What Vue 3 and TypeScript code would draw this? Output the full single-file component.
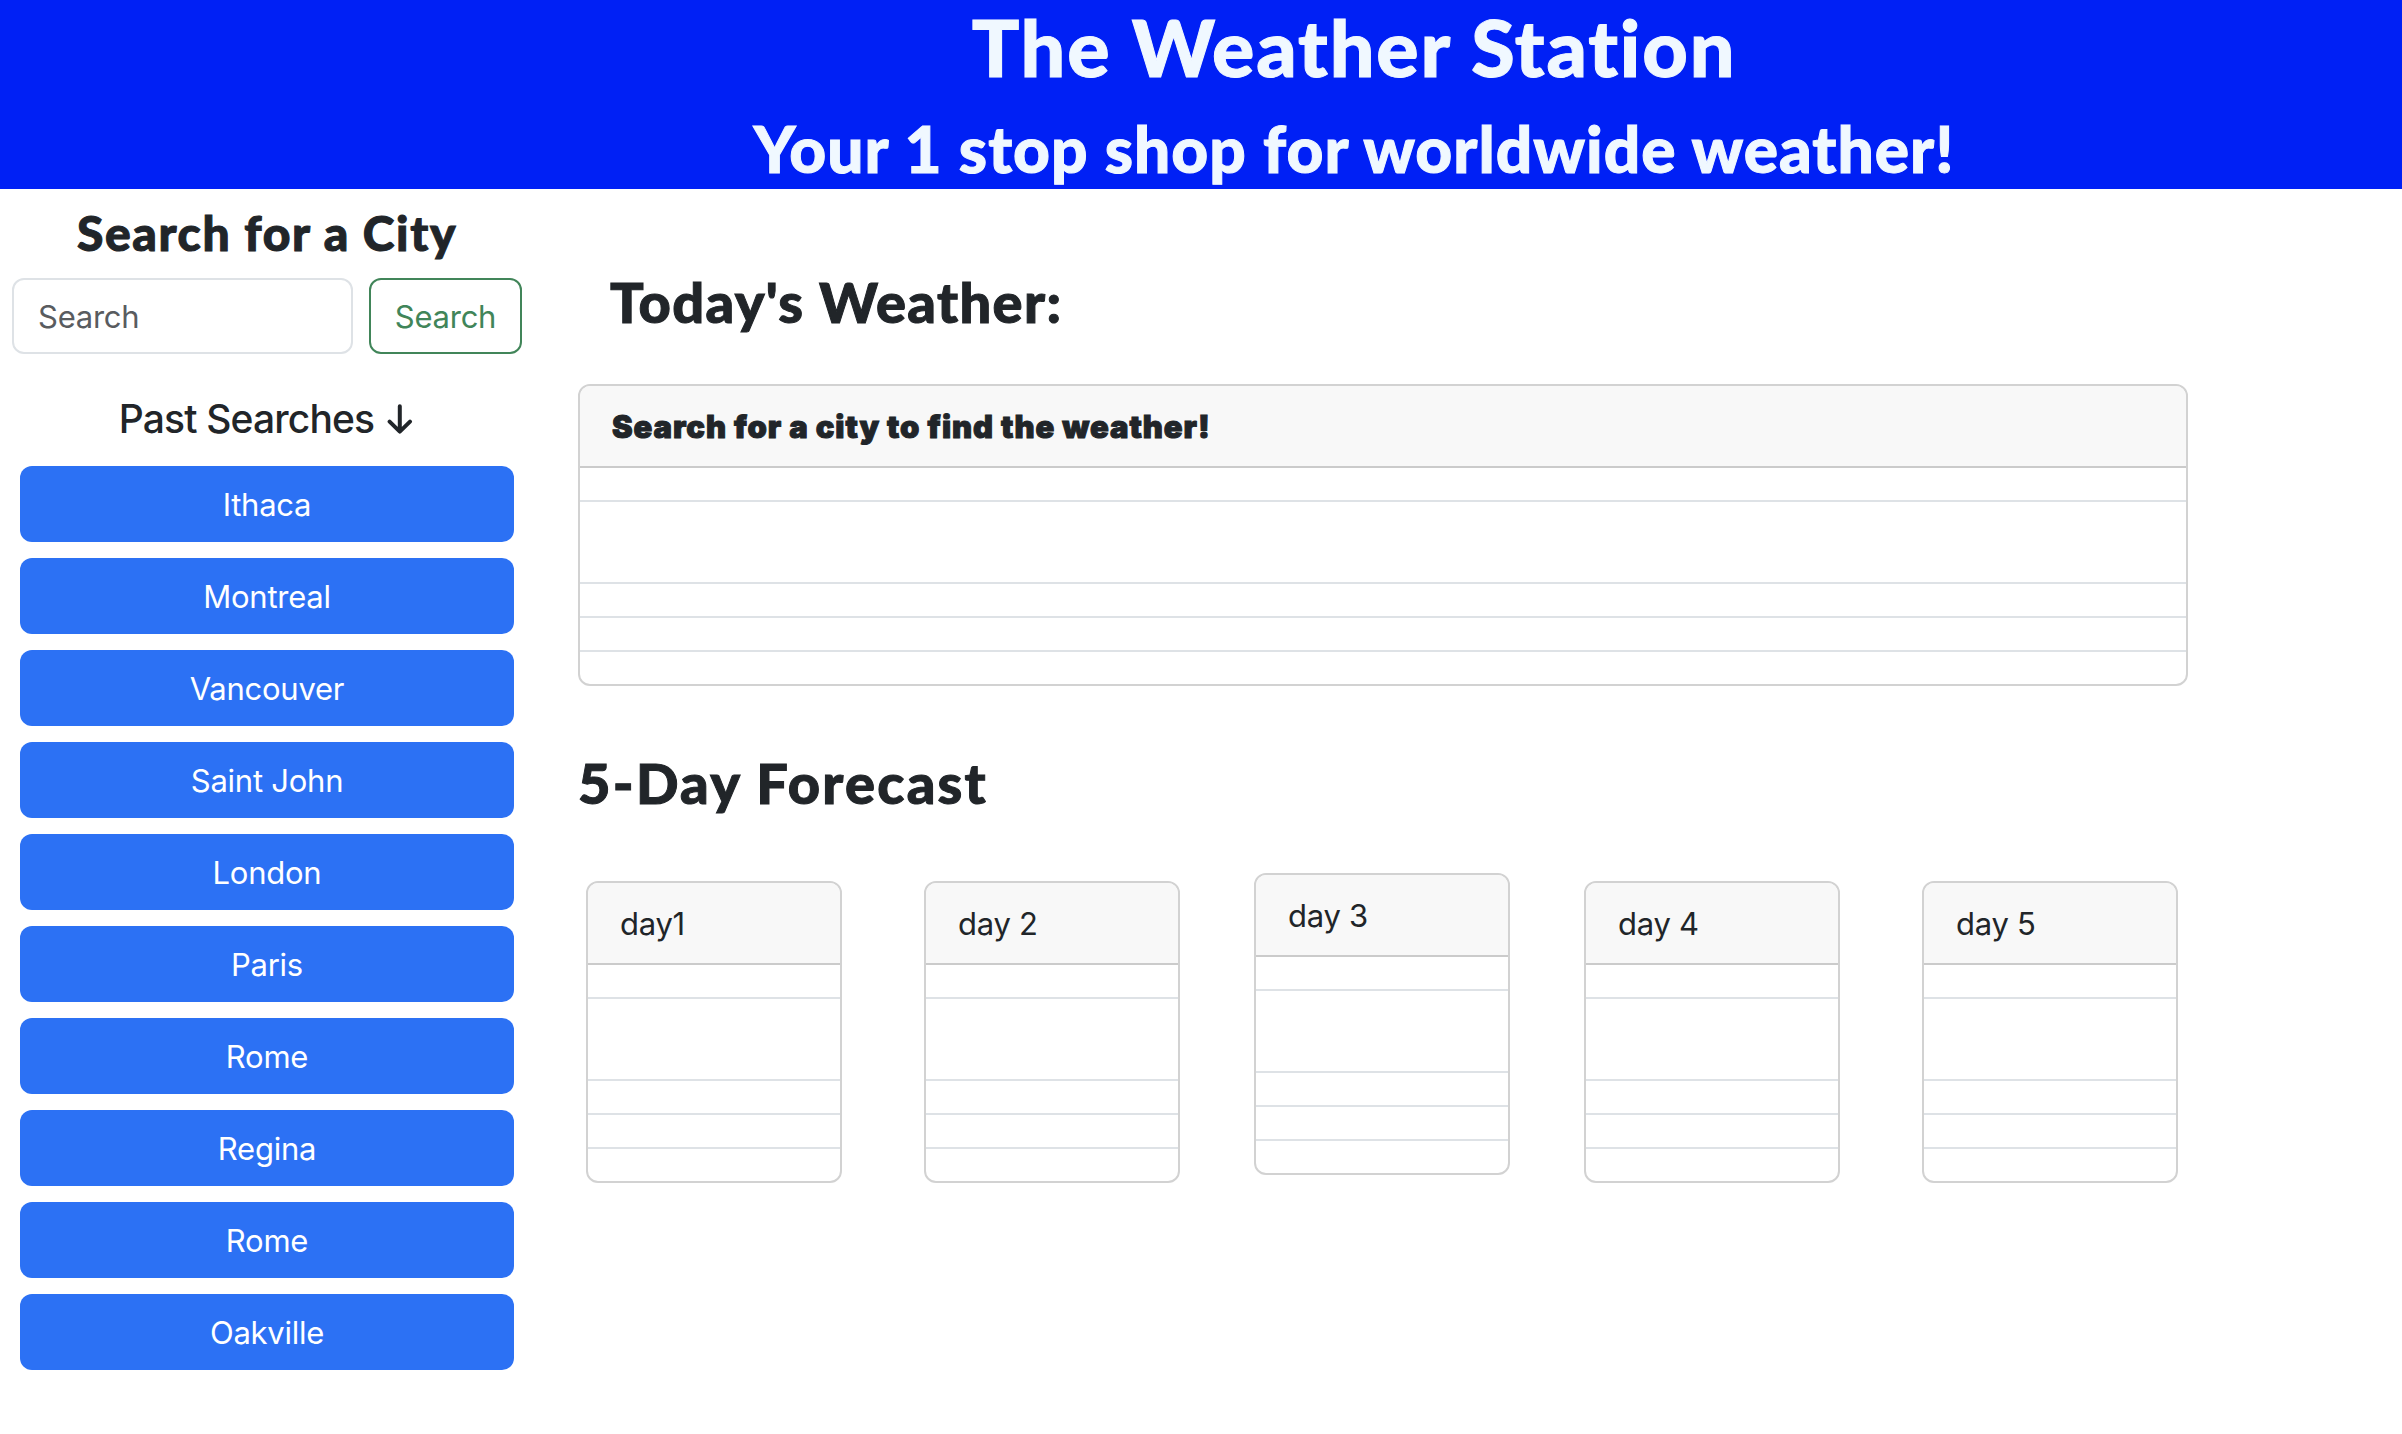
<script setup lang="ts">
interface Day {
  label: string
  raised?: boolean
}

const pastSearches: string[] = [
  'Ithaca', 'Montreal', 'Vancouver', 'Saint John', 'London',
  'Paris', 'Rome', 'Regina', 'Rome', 'Oakville',
]

const days: Day[] = [
  { label: 'day1' },
  { label: 'day 2' },
  { label: 'day 3', raised: true },
  { label: 'day 4' },
  { label: 'day 5' },
]
</script>

<template>
  <div class="page">
    <header class="banner">
      <h1>The Weather Station</h1>
      <h2>Your 1 stop shop for worldwide weather!</h2>
    </header>
    <div class="columns">
      <aside class="sidebar">
        <h4 class="search-title">Search for a City</h4>
        <form class="search" @submit.prevent>
          <input class="field" type="search" placeholder="Search" />
          <button class="submit" type="submit">Search</button>
        </form>
        <h5 class="past-title">
          <span>Past Searches</span>
          <svg class="arrow" viewBox="0 0 26 30" fill="none" stroke="currentColor" stroke-width="4" stroke-linecap="round" stroke-linejoin="round">
            <path d="M12.8 2.2V27.4M2.6 17.6L12.8 27.6L23 17.6" />
          </svg>
        </h5>
        <div class="history">
          <button v-for="(city, i) in pastSearches" :key="i" type="button">{{ city }}</button>
        </div>
      </aside>
      <main class="content">
        <h3 class="today-title">Today's Weather:</h3>
        <section class="card">
          <div class="card-header today">Search for a city to find the weather!</div>
          <ul><li></li><li class="tall"></li><li></li><li></li><li></li></ul>
        </section>
        <h3 class="forecast-title">5-Day Forecast</h3>
        <div class="forecast">
          <section v-for="day in days" :key="day.label" class="card day" :class="{ raised: day.raised }">
            <div class="card-header">{{ day.label }}</div>
            <ul><li></li><li class="tall"></li><li></li><li></li><li></li></ul>
          </section>
        </div>
      </main>
    </div>
  </div>
</template>

<style>
body {
  margin: 0;
  background: #fff;
}
</style>

<style scoped>
* {
  box-sizing: border-box;
}
.page {
  height: 1434px;
  overflow: hidden;
  color: #212529;
  font: 400 31px/48px Inter, "Liberation Sans", sans-serif;
  letter-spacing: -0.25px;
}
h1, h2, h3, h4, h5, ul {
  margin: 0;
  padding: 0;
}
h1, h2, h3, .search-title {
  font-family: Lato, "Open Sans", sans-serif;
  font-weight: 900;
  font-variant-ligatures: none;
  white-space: nowrap;
  -webkit-text-stroke: 1px currentColor;
}
.banner {
  height: 189px;
  padding-left: 306px;
  background: #0020f5;
  color: #f0f8ff;
  text-align: center;
}
h1 {
  font-size: 79px;
  line-height: 93px;
  letter-spacing: 1.85px;
}
h2 {
  padding-top: 17px;
  font-size: 64px;
  line-height: 77px;
  letter-spacing: 1px;
}
.columns {
  display: flex;
}
.sidebar {
  width: 534px;
  padding: 16px 12px 0;
}
.search-title {
  height: 73px;
  font-size: 48px;
  line-height: 56px;
  letter-spacing: 1.6px;
  text-align: center;
}
.search {
  display: flex;
  gap: 16px;
}
.field,
.submit {
  height: 76px;
  border-radius: 12px;
  font: inherit;
  letter-spacing: inherit;
  background: #fff;
}
.field {
  width: 341px;
  padding: 1px 24px 0;
  border: 2px solid #dee2e6;
  appearance: none;
}
.field::placeholder {
  color: #595c5f;
  opacity: 1;
}
.submit {
  width: 153px;
  padding: 1px 0 0;
  border: 2px solid #418559;
  color: #418559;
}
.past-title {
  display: flex;
  justify-content: center;
  gap: 13px;
  padding: 41px 2px 23px 0;
  font-size: 39px;
  font-weight: 500;
  line-height: 48px;
  letter-spacing: -0.85px;
}
.arrow {
  width: 26px;
  height: 30px;
  margin-top: 9px;
}
.history {
  display: flex;
  flex-direction: column;
  gap: 16px;
  padding: 0 8px;
}
.history button {
  height: 76px;
  padding: 1px 0 0;
  border: 0;
  border-radius: 12px;
  background: #2c71f4;
  color: #fff;
  font: inherit;
  letter-spacing: inherit;
}
.content {
  width: 1654px;
  padding-left: 44px;
}
.today-title,
.forecast-title {
  font-size: 56px;
  line-height: 68px;
}
.today-title {
  height: 195px;
  padding: 79px 0 0 32px;
  letter-spacing: 1.35px;
}
.forecast-title {
  height: 195px;
  padding-top: 63px;
  letter-spacing: 2.25px;
}
.card {
  height: 302px;
  overflow: hidden;
  border: 2px solid #d2d2d2;
  border-radius: 12px;
}
.card-header {
  height: 82px;
  padding: 17px 32px 15px;
  border-bottom: 2px solid #cbcbcb;
  background: #f8f8f8;
}
.today {
  font-weight: 900;
  letter-spacing: 0.9px;
  -webkit-text-stroke: 1px currentColor;
}
ul {
  list-style: none;
}
li {
  height: 34px;
  border-bottom: 2px solid #dee2e6;
}
li.tall {
  height: 82px;
}
li:last-child {
  border-bottom: 0;
}
.forecast {
  display: flex;
  padding-left: 8px;
  gap: 82px;
}
.day {
  width: 256px;
}
.raised {
  margin: -8px -8px 0;
}
</style>
